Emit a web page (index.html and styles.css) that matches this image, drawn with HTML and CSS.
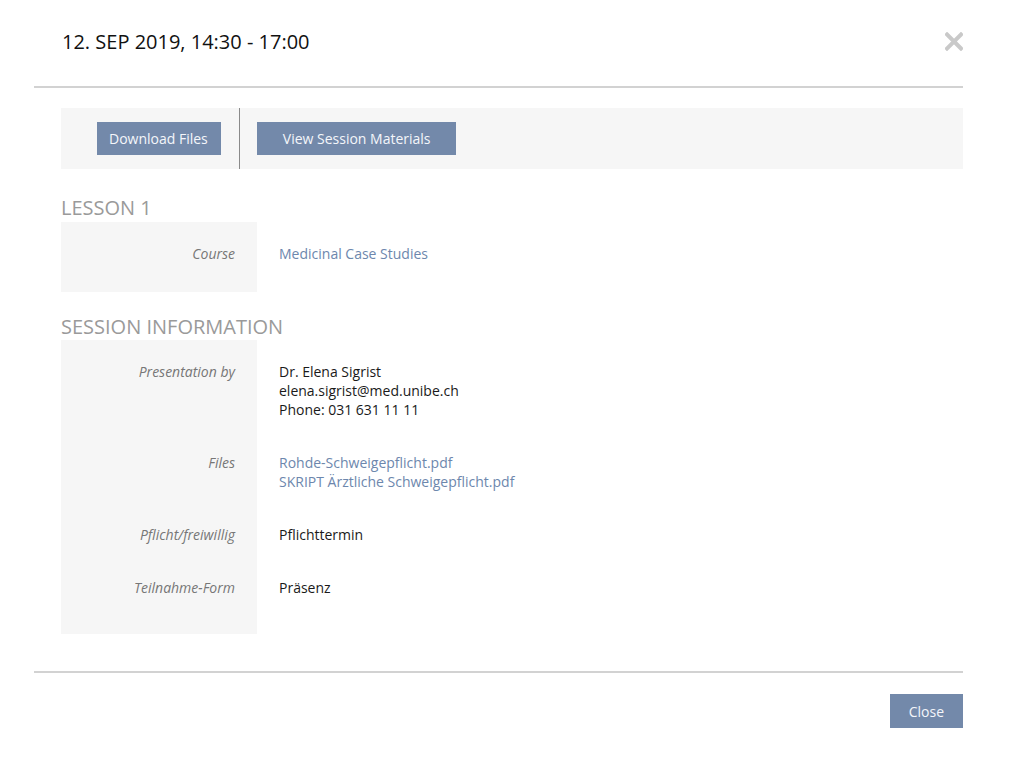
FILE: index.html
```html
<!DOCTYPE html>
<html lang="en">
<head>
    <meta charset="UTF-8">
    <title>Session Details</title>
    <link rel="stylesheet" href="styles.css">
</head>
<body>
    <div class="modal">
        <div class="modal-header">
            <h1>12. SEP 2019, 14:30 - 17:00</h1>
            <button class="close-x" aria-label="Close">
                <svg width="18" height="19" viewBox="0 0 18 19">
                    <path d="M2 2.5 L16 16.5 M16 2.5 L2 16.5" stroke="#c9c9c9" stroke-width="4" stroke-linecap="square"/>
                </svg>
            </button>
        </div>

        <div class="modal-body">
            <div class="toolbar">
                <div class="toolbar-group first">
                    <button class="btn btn-download">Download Files</button>
                </div>
                <div class="toolbar-group">
                    <button class="btn btn-materials">View Session Materials</button>
                </div>
            </div>

            <h2 class="section-title lesson-title">Lesson 1</h2>
            <div class="info-table lesson-table">
                <div class="label">Course</div>
                <div class="value"><a href="#">Medicinal Case Studies</a></div>
            </div>

            <h2 class="section-title session-title">Session Information</h2>
            <div class="info-table session-table">
                <div class="label">Presentation by</div>
                <div class="value">
                    Dr. Elena Sigrist<br>
                    elena.sigrist@med.unibe.ch<br>
                    Phone: 031 631 11 11
                </div>

                <div class="label">Files</div>
                <div class="value">
                    <a href="#">Rohde-Schweigepflicht.pdf</a><br>
                    <a href="#">SKRIPT Ärztliche Schweigepflicht.pdf</a>
                </div>

                <div class="label">Pflicht/freiwillig</div>
                <div class="value">Pflichttermin</div>

                <div class="label">Teilnahme-Form</div>
                <div class="value">Präsenz</div>
            </div>
        </div>

        <div class="modal-footer">
            <button class="btn btn-close">Close</button>
        </div>
    </div>
</body>
</html>
```

FILE: styles.css
```css
body {
    margin: 0;
    font-family: "Open Sans", "Liberation Sans", sans-serif;
    font-size: 14px;
    color: #1a1a1a;
    background: #fff;
}

.modal {
    width: 929px;
    margin-left: 34px;
}

.modal-header {
    display: flex;
    align-items: center;
    justify-content: space-between;
    padding: 28px 0 31px 28px;
    border-bottom: 2px solid #d2d2d2;
}

.modal-header h1 {
    margin: 0;
    font-size: 20px;
    font-weight: 400;
    line-height: 27px;
    color: #111;
}

.close-x {
    border: none;
    background: none;
    padding: 0;
    width: 18px;
    height: 19px;
    cursor: pointer;
    display: flex;
}

.modal-body {
    padding: 20px 0 37px 27px;
}

.toolbar {
    display: flex;
    background-color: #f6f6f6;
    height: 61px;
}

.toolbar-group {
    display: flex;
    align-items: center;
    padding: 0 17px;
}

.toolbar-group.first {
    padding: 0 18px 0 36px;
    border-right: 1px solid #8a8a8a;
}

.btn {
    font-family: "Open Sans", "Liberation Sans", sans-serif;
    font-size: 14px;
    color: #f4f6fa;
    background-color: #7389aa;
    border: none;
    height: 33px;
    padding: 0 12px;
    cursor: pointer;
}

.btn-download {
    padding: 0 13px 0 12px;
}

.btn-materials {
    padding: 0 25px 0 26px;
}

.section-title {
    margin: 0;
    font-size: 20px;
    font-weight: 400;
    line-height: 27px;
    color: #9a9a9a;
    text-transform: uppercase;
}

.lesson-title {
    margin-top: 25px;
    margin-bottom: 1px;
}

.session-title {
    margin-top: 21px;
}

.info-table {
    display: grid;
    grid-template-columns: 196px 1fr;
    line-height: 19px;
    background: linear-gradient(to right, #f6f6f6 196px, #fff 196px);
    padding-top: 5px;
}

.lesson-table {
    padding-bottom: 12px;
}

.session-table {
    padding-bottom: 20px;
}

.label {
    text-align: right;
    font-style: italic;
    color: #777;
    padding: 17px 22px 17px 0;
}

.value {
    padding: 17px 0 17px 22px;
}

.value a {
    color: #6d87ad;
    text-decoration: none;
}

.modal-footer {
    display: flex;
    justify-content: flex-end;
    border-top: 2px solid #d2d2d2;
    padding-top: 21px;
}

.btn-close {
    height: 34px;
    padding: 0 19px;
}
```
